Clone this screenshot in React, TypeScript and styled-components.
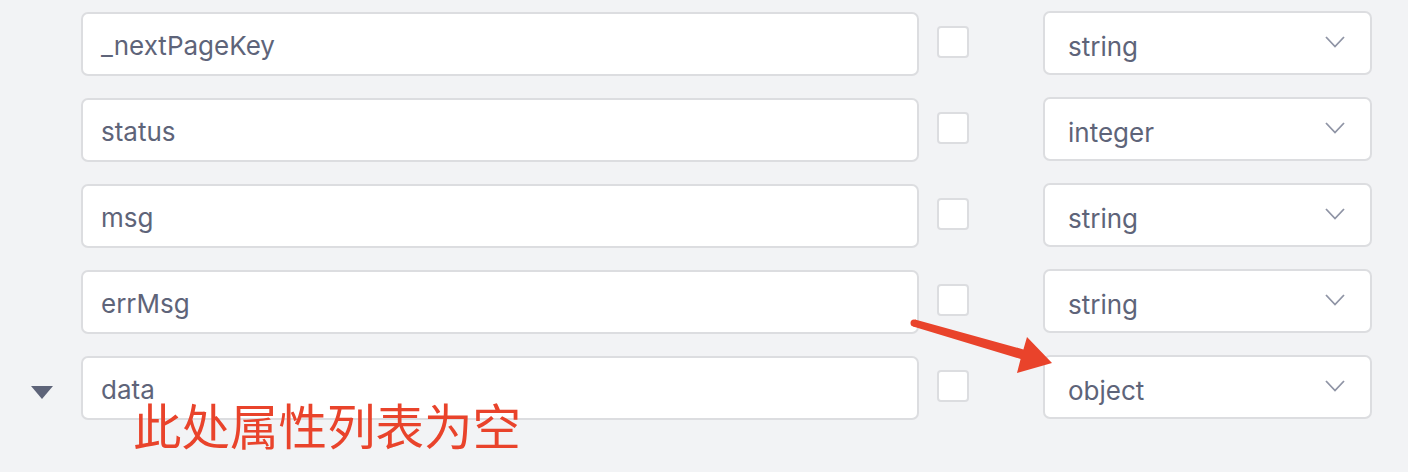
import React from "react";
import styled, { createGlobalStyle } from "styled-components";

const GlobalStyle = createGlobalStyle`
  html, body {
    margin: 0;
    padding: 0;
    background: #f2f3f5;
  }
  body {
    font-family: Inter, "Noto Sans", "Noto Sans CJK SC", sans-serif;
  }
`;

const Page = styled.div`
  position: relative;
  width: 1408px;
  height: 472px;
  background: #f2f3f5;
  overflow: hidden;
  padding-top: 12px;
  box-sizing: border-box;
`;

const List = styled.div`
  display: flex;
  flex-direction: column;
  gap: 22px;
`;

const Row = styled.div`
  display: flex;
  align-items: flex-start;
  height: 64px;
`;

const ToggleCell = styled.div`
  width: 81px;
  height: 64px;
  display: flex;
  justify-content: flex-start;
  padding-left: 31px;
  padding-top: 30px;
  box-sizing: border-box;
`;

const NameInput = styled.div`
  width: 838px;
  height: 64px;
  box-sizing: border-box;
  background: #ffffff;
  border: 2px solid #dcdde0;
  border-radius: 7px;
  display: flex;
  align-items: center;
  padding: 3px 18px 0;
  font-family: Inter, sans-serif;
  font-size: 26px;
  line-height: 32px;
  color: #5e6479;
`;

const CheckBox = styled.div`
  width: 32px;
  height: 32px;
  margin-left: 18px;
  margin-top: 14px;
  box-sizing: border-box;
  background: #ffffff;
  border: 2px solid #dcdde0;
  border-radius: 4px;
`;

const Select = styled.div`
  width: 329px;
  height: 64px;
  margin-left: 74px;
  margin-top: -1px;
  box-sizing: border-box;
  background: #ffffff;
  border: 2px solid #dcdde0;
  border-radius: 7px;
  display: flex;
  align-items: center;
  justify-content: space-between;
  padding: 0 25px 0 23px;
`;

const SelectValue = styled.span`
  font-family: Inter, sans-serif;
  font-size: 26px;
  line-height: 32px;
  color: #5e6479;
  padding-top: 8px;
`;

const Chevron = styled.svg`
  width: 20px;
  height: 12px;
  margin-top: -2px;
  display: block;
`;

const Caret = styled.svg`
  width: 22px;
  height: 13px;
  display: block;
`;

const Annotation = styled.div`
  position: absolute;
  left: 133px;
  top: 398px;
  font-family: "Noto Sans CJK SC", sans-serif;
  font-size: 48.5px;
  line-height: 52px;
  color: #e9432b;
  white-space: nowrap;
`;

const ArrowLayer = styled.svg`
  position: absolute;
  left: 0;
  top: 0;
  width: 1408px;
  height: 472px;
  pointer-events: none;
`;

type Field = { name: string; type: string; expandable?: boolean };

const fields: Field[] = [
  { name: "_nextPageKey", type: "string" },
  { name: "status", type: "integer" },
  { name: "msg", type: "string" },
  { name: "errMsg", type: "string" },
  { name: "data", type: "object", expandable: true },
];

export default function App() {
  return (
    <>
      <GlobalStyle />
      <Page>
        <List>
          {fields.map((f) => (
            <Row key={f.name}>
              <ToggleCell>
                {f.expandable && (
                  <Caret viewBox="0 0 22 13">
                    <polygon points="0,0 22,0 11,13" fill="#5e6479" />
                  </Caret>
                )}
              </ToggleCell>
              <NameInput>{f.name}</NameInput>
              <CheckBox />
              <Select>
                <SelectValue>{f.type}</SelectValue>
                <Chevron viewBox="0 0 20 12">
                  <path
                    d="M1 1 L10 10.5 L19 1"
                    fill="none"
                    stroke="#8f94a5"
                    strokeWidth="1.8"
                  />
                </Chevron>
              </Select>
            </Row>
          ))}
        </List>
        <Annotation>此处属性列表为空</Annotation>
        <ArrowLayer viewBox="0 0 1408 472">
          <polygon
            points="915,319.6 1023.4,349.4 1027,337 1052,363 1017,373 1020.6,359 913,326.4"
            fill="#e9432b"
          />
          <circle cx="914" cy="323" r="3.5" fill="#e9432b" />
        </ArrowLayer>
      </Page>
    </>
  );
}
